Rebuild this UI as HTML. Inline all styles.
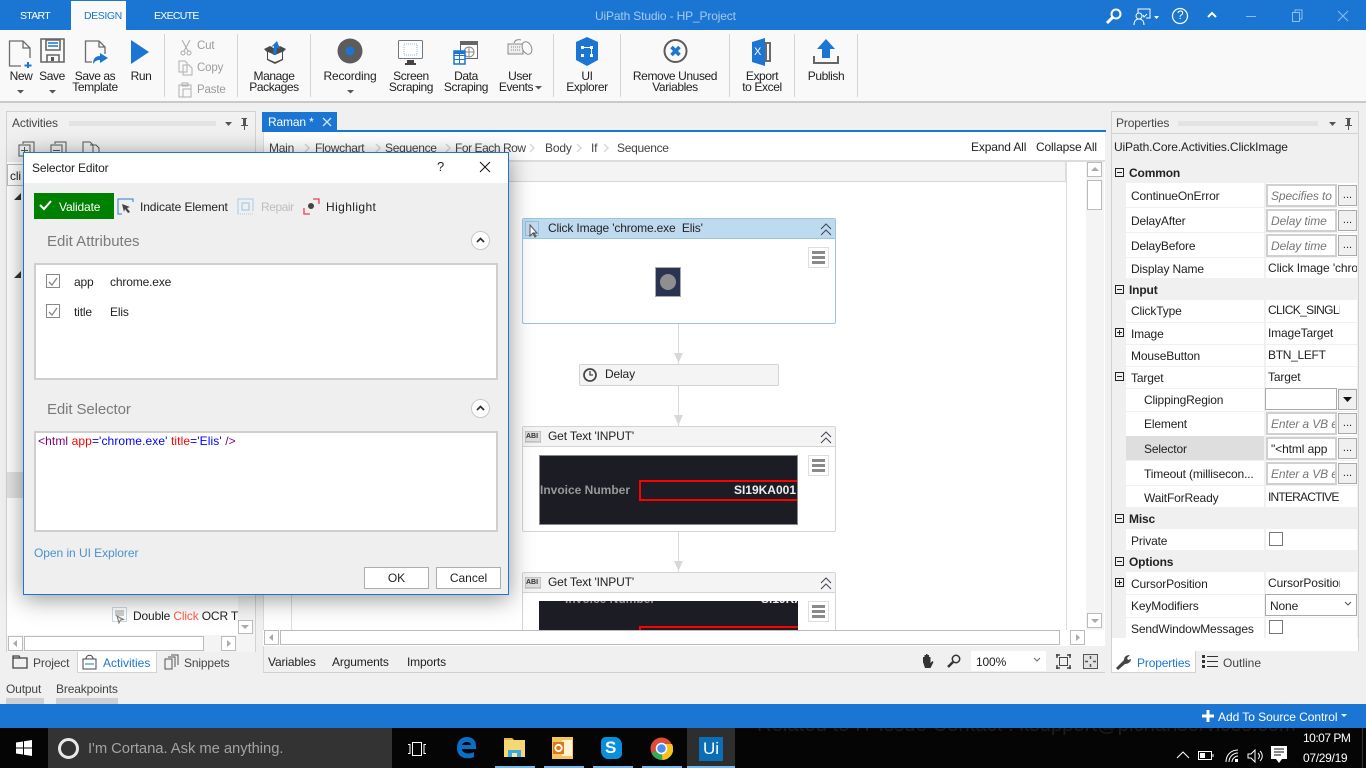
<!DOCTYPE html>
<html><head><meta charset="utf-8"><title>UiPath Studio - HP_Project</title>
<style>
html,body{margin:0;padding:0;width:1366px;height:768px;overflow:hidden;background:#f0f0f0;font-family:"Liberation Sans",sans-serif;font-size:12px;color:#222}
div,span,svg{position:absolute;box-sizing:border-box}
.t{white-space:nowrap;line-height:16px;letter-spacing:-.15px}
.c{text-align:center;line-height:11px;transform:translateX(-50%);white-space:nowrap;letter-spacing:-.4px;color:#222}
.w{color:#fff}
.sb{background:#fff;border:1px solid #bbb}
.tb{background:#fff;border:2px solid #d0d0d0;font-style:italic;color:#777;white-space:nowrap;overflow:hidden;line-height:20px;padding-left:3px;letter-spacing:-.1px}
.dd{background:#f0f0f0;border:1px solid #aaa;text-align:center;line-height:19px;width:19px;height:21px;left:1338px;font-size:11px}
.wr{background:#fff;left:1126px;width:231px}
.sep{width:1px;top:34px;height:63px;background:#d4d4d4}
.pm{width:9px;height:9px;border:1px solid #222;left:1115px}
.pm:before{content:"";position:absolute;left:1px;top:3px;width:5px;height:1px;background:#222}
.pl:after{content:"";position:absolute;left:3px;top:1px;width:1px;height:5px;background:#222}
.ham{left:808px;width:21px;height:21px;background:#fff;border:1px solid #ddd}
.ham:before{content:"";position:absolute;left:3px;top:3px;width:13px;height:3px;background:#8a8a8a;box-shadow:0 5px 0 #8a8a8a,0 10px 0 #8a8a8a}
.card{left:522px;width:314px;background:#fff;border:1px solid #d4d4d4;border-radius:2px}
</style></head><body>

<!-- title bar -->
<div style="left:0;top:0;width:1366px;height:30px;background:#1a76d2"></div>
<div style="left:71px;top:1px;width:55px;height:29px;background:#f9f9f9"></div>
<span class="t w" style="left:20px;top:8px;font-size:10.500px;letter-spacing:-.7px">START</span>
<span class="t" style="left:84px;top:8px;font-size:10.500px;letter-spacing:-.4px;color:#1a76d2">DESIGN</span>
<span class="t w" style="left:154px;top:8px;font-size:10.500px;letter-spacing:-.7px">EXECUTE</span>
<span class="t" style="left:595px;top:8px;color:#a6c9ee">UiPath Studio - HP_Project</span>
<svg style="left:1105px;top:7px" width="18" height="18" fill="none" stroke="#fff"><circle cx="11" cy="7" r="4.500" stroke-width="2"/><path d="M8 10l-6 6" stroke-width="3"/></svg>
<svg style="left:1133px;top:8px" width="28" height="18" fill="none" stroke="#fff"><path d="M5 5V1h12v9h-4"/><circle cx="6" cy="8" r="3"/><path d="M1 17c0-4 2-6 5-6s5 2 5 6"/><path d="M10 7l1 2 3-3"/><path d="M21 8h5l-2.500 3z" fill="#fff" stroke="none"/></svg>
<svg style="left:1171px;top:7px" width="18" height="18" fill="none" stroke="#fff"><circle cx="9" cy="9" r="7.500" stroke-width="1.200"/></svg>
<span class="t w" style="left:1177px;top:7px;font-size:12px">?</span>
<svg style="left:1207px;top:11px" width="10" height="8" fill="none" stroke="#fff" stroke-width="2"><path d="M1 6l4-4 4 4"/></svg>
<div style="left:1246px;top:16px;width:10px;height:1px;background:#8fbdec"></div>
<svg style="left:1291px;top:9px" width="12" height="14" fill="none" stroke="#8fbdec"><path d="M1.500 3.500h7v9h-7zM4 3V1h7v9H9"/></svg>
<svg style="left:1337px;top:10px" width="12" height="12" fill="none" stroke="#8fbdec"><path d="M1 1l10 10M11 1L1 11"/></svg>

<!-- ribbon -->
<div style="left:0;top:30px;width:1366px;height:73px;background:#f9f9f9;border-bottom:2px solid #c9c9c9"></div>
<div class="sep" style="left:164px"></div><div class="sep" style="left:237px"></div><div class="sep" style="left:310px"></div><div class="sep" style="left:553px"></div><div class="sep" style="left:620px"></div><div class="sep" style="left:729px"></div><div class="sep" style="left:794px"></div><div class="sep" style="left:857px"></div>

<svg style="left:8px;top:38px" width="26" height="30" fill="none" stroke="#6b6b6b" stroke-width="1.300"><path d="M13 28H1.500V3H15l7 7v10M15 3v7h7"/><path d="M20 24v7M16.500 27.500h7" stroke="#1a76d2" stroke-width="2"/></svg>
<svg style="left:40px;top:38px" width="26" height="26" fill="none" stroke="#666" stroke-width="1.600"><path d="M1 1h23v23H1z"/><path d="M6 2h14v10H6z" fill="#f9f9f9"/><path d="M8 5h10M8 8h10" stroke="#1a76d2" stroke-width="1.500"/><path d="M7 24v-7h12v7"/><path d="M11 19h3v4h-3z" fill="#555" stroke="none"/></svg>
<svg style="left:84px;top:38px" width="26" height="28" fill="none" stroke="#6b6b6b" stroke-width="1.300"><path d="M8 24H1.500V3H15l6 6v7M15 3v6h6"/><path d="M9 26c0-6 3-8 7-8v-3l8 5-8 5v-3c-3 0-5 1-7 4z" fill="#1a76d2" stroke="none"/></svg>
<svg style="left:131px;top:40px" width="18" height="24"><path d="M0 0l18 12L0 24z" fill="#1a76d2"/></svg>
<span class="c" style="left:21px;top:71px">New</span><span class="c" style="left:52px;top:71px">Save</span><span class="c" style="left:95px;top:71px">Save as<br>Template</span><span class="c" style="left:141px;top:71px">Run</span>
<svg style="left:17px;top:90px" width="46" height="4" fill="#555"><path d="M0 0h7L3.500 3.500zM32 0h7l-3.500 3.500z"/></svg>

<svg style="left:180px;top:40px" width="12" height="16" fill="none" stroke="#a8a8a8"><path d="M2 0l6 11M10 0L4 11"/><circle cx="3" cy="13" r="2"/><circle cx="9" cy="13" r="2"/></svg>
<svg style="left:178px;top:60px" width="15" height="16" fill="none" stroke="#b0b0b0"><path d="M1 1h6l2 2v9H1zM5 5h6l3 3v7H5z" fill="#f9f9f9"/></svg>
<svg style="left:178px;top:82px" width="15" height="16" fill="none" stroke="#b0b0b0"><path d="M1 3h12v12H1zM4 1h6v3H4zM5 7h8v8H5z"/></svg>
<span class="t" style="left:197px;top:38px;color:#9c9c9c;font-size:11.500px">Cut</span><span class="t" style="left:197px;top:60px;color:#9c9c9c;font-size:11.500px">Copy</span><span class="t" style="left:197px;top:82px;color:#9c9c9c;font-size:11.500px">Paste</span>

<svg style="left:262px;top:40px" width="26" height="26"><path d="M2 9l6-3 5 3 5-3 6 3-3 3v8l-8 4-8-4v-8z" fill="#4a4a4a"/><path d="M6 12l7 3 7-3v7l-7 3-7-3z" fill="#f9f9f9"/><path d="M11 15l1-9-3 1 6-6 3 8-3-1-1 7z" fill="#1a76d2"/></svg>
<span class="c" style="left:274px;top:71px">Manage<br>Packages</span>
<svg style="left:337px;top:38px" width="26" height="26"><circle cx="13" cy="13" r="12.500" fill="#5c5c5c"/><circle cx="13" cy="13" r="4.500" fill="#1a76d2"/></svg>
<span class="c" style="left:350px;top:71px;letter-spacing:-.2px">Recording</span>
<svg style="left:347px;top:90px" width="7" height="4" fill="#555"><path d="M0 0h7L3.500 3.500z"/></svg>
<svg style="left:398px;top:40px" width="25" height="26" fill="none"><rect x=".5" y=".5" width="24" height="18" rx="1" fill="#fff" stroke="#777"/><rect x="6" y="4" width="13" height="11" stroke="#8db8e6" stroke-dasharray="1 1"/><path d="M9 23v-3h7v3z" fill="#444"/><path d="M7 24h11" stroke="#444" stroke-width="2"/></svg>
<span class="c" style="left:411px;top:71px">Screen<br>Scraping</span>
<svg style="left:453px;top:41px" width="26" height="26" fill="none"><rect x="7.500" y=".5" width="17" height="17" fill="#fff" stroke="#666"/><path d="M8 1h16v3H8z" fill="#666"/><circle cx="16" cy="11" r="5" stroke="#888"/><path d="M11 11h10M16 6v10" stroke="#888"/><rect x="1" y="10" width="11" height="13" fill="#fff" stroke="#1a76d2" stroke-width="1.500"/><path d="M1 14.500h11M1 18.500h11M6.500 10v13" stroke="#1a76d2"/><path d="M1 10h11v3H1z" fill="#1a76d2"/></svg>
<span class="c" style="left:466px;top:71px">Data<br>Scraping</span>
<svg style="left:507px;top:38px" width="27" height="20" fill="none" stroke="#8a8a8a"><path d="M1 6h15v10H1z" fill="#eee"/><path d="M4 9h9M4 12h9" stroke-dasharray="1 1"/><path d="M7 5c1-3 4-4 7-3"/><ellipse cx="20" cy="10" rx="4.500" ry="6.500" fill="#f9f9f9" transform="rotate(-25 20 10)"/></svg>
<span class="c" style="left:520px;top:71px">User</span><span class="c" style="left:516px;top:82px">Events</span>
<svg style="left:535px;top:86px" width="7" height="4" fill="#555"><path d="M0 0h7L3.500 3.500z"/></svg>
<svg style="left:575px;top:37px" width="24" height="30"><path d="M12 0l11 5v18l-11 6L1 23V5z" fill="#1a76d2"/><g fill="#fff"><rect x="6" y="9" width="3" height="3"/><rect x="15" y="9" width="3" height="3"/><rect x="6" y="17" width="3" height="3"/><rect x="15" y="17" width="3" height="3"/><rect x="9" y="10" width="6" height="1"/><rect x="16" y="12" width="1" height="5"/></g></svg>
<span class="c" style="left:587px;top:71px">UI<br>Explorer</span>
<svg style="left:663px;top:38px" width="25" height="26" fill="none"><circle cx="12.500" cy="13" r="11" stroke="#5c5c5c" stroke-width="2"/><path d="M8.500 9l8 8M16.500 9l-8 8" stroke="#1a76d2" stroke-width="3.500"/></svg>
<span class="c" style="left:675px;top:71px">Remove Unused<br>Variables</span>
<svg style="left:751px;top:38px" width="22" height="28"><path d="M1 4l13-4v28L1 24z" fill="#1a76d2"/><path d="M14 4h6v20h-6z" fill="#6b6b6b"/><path d="M16 6h2v16h-2z" fill="#f9f9f9"/></svg>
<span class="t w" style="left:754px;top:44px;font-size:11px">X</span>
<span class="c" style="left:762px;top:71px">Export<br>to Excel</span>
<svg style="left:813px;top:38px" width="26" height="28"><path d="M13 1l9 10h-5v9H9v-9H4z" fill="#1a76d2"/><path d="M1 18v7h24v-7" fill="none" stroke="#666" stroke-width="2"/></svg>
<span class="c" style="left:826px;top:71px">Publish</span>

<!-- activities panel -->
<div style="left:6px;top:111px;width:250px;height:541px;background:#fff;border:1px solid #d2d2d2"></div>
<div style="left:7px;top:112px;width:248px;height:50px;background:linear-gradient(#f2f2f2,#ececec)"></div>
<span class="t" style="left:12px;top:115px;color:#444">Activities</span>
<div style="left:69px;top:121px;width:147px;height:5px;background:radial-gradient(#bbb 40%,transparent 45%) 0 0/2px 2px"></div>
<svg style="left:225px;top:117px" width="24" height="14"><path d="M0 5h7L3.500 9z" fill="#555"/><path d="M16 1h6v1h-1v6h2v1h-3v4h-1V9h-3V8h2V2h-1z" fill="#555"/></svg>
<svg style="left:18px;top:141px" width="90" height="16" fill="none" stroke="#555"><path d="M5 3V1h11v11h-3M1 4h11v11H1zM3 9.500h7M6.500 6v7"/><path d="M37 3V1h11v11h-3M33 4h11v11H33zM35 9.500h7"/><path d="M65 14V1h7l3 3v10zM72 4h6l3 3v7"/></svg>
<div class="sb" style="left:7px;top:164px;width:30px;height:22px;border-color:#bbb"></div>
<span class="t" style="left:10px;top:168px">cli</span>
<svg style="left:14px;top:193px" width="8" height="90" fill="#333"><path d="M7 0v7H0zM7 78v7H0z"/></svg>
<div style="left:7px;top:472px;width:30px;height:26px;background:#e3e3e3"></div>
<div style="left:238px;top:596px;width:17px;height:40px;background:#f3f3f3"></div>
<svg style="left:112px;top:607px" width="16" height="17" fill="none"><rect x=".5" y=".5" width="14" height="14" stroke="#8fb3d0" stroke-dasharray="1 1"/><path d="M3 3h9v6H3z" fill="#cfcfcf"/><path d="M5 9l2 7 1.500-3 3-.500z" fill="#eee" stroke="#777"/></svg>
<span class="t" style="left:133px;top:608px;white-space:nowrap">Double <b style="color:#ff5a45;font-weight:400">Click</b> OCR T</span>
<div class="sb" style="left:238px;top:620px;width:15px;height:14px"></div><svg style="left:241px;top:625px" width="9" height="5"><path d="M0 0h8L4 4z" fill="#aaa"/></svg>
<div style="left:7px;top:635px;width:248px;height:17px;background:#f4f4f4"></div>
<div class="sb" style="left:8px;top:636px;width:15px;height:15px"></div><svg style="left:13px;top:640px" width="5" height="8"><path d="M4 0v7L0 3.500z" fill="#aaa"/></svg>
<div class="sb" style="left:24px;top:636px;width:180px;height:15px"></div>
<div class="sb" style="left:221px;top:636px;width:15px;height:15px"></div><svg style="left:227px;top:640px" width="5" height="8"><path d="M0 0v7l4-3.500z" fill="#aaa"/></svg>
<svg style="left:12px;top:655px" width="17" height="15" fill="none" stroke="#444" stroke-width="1.300"><path d="M1 13V1h6l1 2h7v10z"/><path d="M1 3h7"/></svg>
<span class="t" style="left:33px;top:655px;color:#444">Project</span>
<div style="left:77px;top:652px;width:80px;height:21px;background:#fff;border:1px solid #d2d2d2;border-top:0"></div>
<svg style="left:82px;top:654px" width="15" height="16" fill="none" stroke="#444"><path d="M1 5h13v10H1zM4 5c0-5 7-5 7 0"/><path d="M3 10h9" stroke="#1a76d2"/></svg>
<span class="t" style="left:103px;top:655px;color:#1a76d2;letter-spacing:0">Activities</span>
<svg style="left:164px;top:654px" width="15" height="16" fill="none" stroke="#555"><path d="M1 5h7v10H1zM4 3h7v10M7 1h7v10"/></svg>
<span class="t" style="left:184px;top:655px;color:#444">Snippets</span>
<span class="t" style="left:6px;top:681px;color:#444">Output</span><span class="t" style="left:56px;top:681px;color:#444">Breakpoints</span>
<div style="left:6px;top:698px;width:38px;height:6px;background:#d0d0d0"></div><div style="left:56px;top:698px;width:62px;height:6px;background:#d0d0d0"></div>

<!-- designer -->
<div style="left:262px;top:112px;width:75px;height:20px;background:#1a76d2"></div>
<span class="t w" style="left:268px;top:114px">Raman *</span>
<svg style="left:322px;top:117px" width="10" height="10" fill="none" stroke="#cfe2f6" stroke-width="1.300"><path d="M1 1l8 8M9 1l-8 8"/></svg>
<div style="left:262px;top:130px;width:844px;height:2px;background:#1a76d2"></div>
<div style="left:263px;top:132px;width:842px;height:498px;background:#fff;border-left:1px solid #ddd"></div>
<div style="left:263px;top:160px;width:842px;height:2px;background:#dcdcdc"></div>
<span class="t" style="left:269px;top:140px;color:#444;letter-spacing:-.25px">Main</span><span class="t" style="left:315px;top:140px;color:#444;letter-spacing:-.3px">Flowchart</span><span class="t" style="left:385px;top:140px;color:#444;letter-spacing:-.3px">Sequence</span><span class="t" style="left:455px;top:140px;color:#444;letter-spacing:-.45px">For Each Row</span><span class="t" style="left:545px;top:140px;color:#444">Body</span><span class="t" style="left:591px;top:140px;color:#444">If</span><span class="t" style="left:617px;top:140px;color:#444;letter-spacing:-.3px">Sequence</span>
<svg style="left:303px;top:142px" width="330" height="12" fill="none" stroke="#d8d8d8" stroke-width="1.500"><path d="M1 2l4 4-4 4M72 2l4 4-4 4M142 2l4 4-4 4M226 2l4 4-4 4M273 2l4 4-4 4M300 2l4 4-4 4" transform="translate(1)"/></svg>
<span class="t" style="left:971px;top:139px;color:#222">Expand All</span><span class="t" style="left:1036px;top:139px;color:#222">Collapse All</span>
<div style="left:291px;top:162px;width:775px;height:20px;background:#f4f4f4;border-bottom:1px solid #d6d6d6;border-right:1px solid #ddd"></div>
<div style="left:291px;top:162px;width:1px;height:468px;background:#ddd"></div>
<div style="left:1066px;top:162px;width:1px;height:468px;background:#ddd"></div>
<div style="left:1086px;top:162px;width:18px;height:468px;background:#f4f4f4"></div>
<div class="sb" style="left:1087px;top:162px;width:15px;height:15px"></div><svg style="left:1091px;top:167px" width="8" height="5"><path d="M0 4h8L4 0z" fill="#aaa"/></svg>
<div class="sb" style="left:1087px;top:180px;width:15px;height:30px"></div>
<div class="sb" style="left:1087px;top:613px;width:15px;height:15px"></div><svg style="left:1091px;top:619px" width="8" height="5"><path d="M0 0h8L4 4z" fill="#aaa"/></svg>

<!-- connectors -->
<div style="left:678px;top:323px;width:1px;height:41px;background:#d8d8d8"></div>
<svg style="left:674px;top:353px" width="10" height="11"><path d="M0 0h9L4.500 10z" fill="#d8d8d8"/></svg>
<div style="left:678px;top:386px;width:1px;height:40px;background:#d8d8d8"></div>
<svg style="left:674px;top:415px" width="10" height="11"><path d="M0 0h9L4.500 10z" fill="#d8d8d8"/></svg>
<div style="left:678px;top:532px;width:1px;height:40px;background:#d8d8d8"></div>
<svg style="left:674px;top:561px" width="10" height="11"><path d="M0 0h9L4.500 10z" fill="#d8d8d8"/></svg>

<!-- click image card -->
<div class="card" style="top:218px;height:106px;border-color:#9cc5e2"></div>
<div style="left:523px;top:219px;width:312px;height:20px;background:#bedaee;border-bottom:1px solid #9cc5e2"></div>
<svg style="left:525px;top:221px" width="17" height="17" fill="none"><rect x=".5" y=".5" width="13" height="14" stroke="#6ea2cc" stroke-dasharray="1 1"/><path d="M5 4v11l3-3 2 4 1-1-2-3h3z" fill="#fff" stroke="#555"/></svg>
<span class="t" style="left:548px;top:220px">Click Image 'chrome.exe&nbsp; Elis'</span>
<svg style="left:820px;top:223px" width="12" height="13" fill="none" stroke="#445" ><path d="M1 6l5-5 5 5M1 12l5-5 5 5"/></svg>
<div class="ham" style="top:247px"></div>
<div style="left:655px;top:267px;width:26px;height:30px;background:#2a3352;border:1px solid #aaa"></div>
<div style="left:660px;top:274px;width:16px;height:16px;border-radius:50%;background:#8f8f8f"></div>

<!-- delay -->
<div style="left:579px;top:364px;width:200px;height:22px;background:#f4f4f4;border:1px solid #d4d4d4;border-radius:2px"></div>
<svg style="left:583px;top:368px" width="15" height="15" fill="none" stroke="#444"><circle cx="7" cy="7" r="6" stroke-width="1.700"/><path d="M7 3v4h3" stroke-width="1.300"/></svg>
<span class="t" style="left:605px;top:366px">Delay</span>

<!-- get text 1 -->
<div class="card" style="top:426px;height:106px"></div>
<div style="left:523px;top:427px;width:312px;height:20px;background:#f4f4f4;border-bottom:1px solid #d4d4d4"></div>
<svg style="left:525px;top:431px" width="16" height="12"><rect width="16" height="11" fill="#ddd" stroke="#aaa"/></svg><span style="left:526px;top:433px;font-size:7px;font-weight:700;line-height:8px;color:#333">ABI</span>
<span class="t" style="left:548px;top:428px">Get Text 'INPUT'</span>
<svg style="left:820px;top:431px" width="12" height="13" fill="none" stroke="#445"><path d="M1 6l5-5 5 5M1 12l5-5 5 5"/></svg>
<div class="ham" style="top:455px"></div>
<div style="left:539px;top:455px;width:259px;height:70px;background:#1c1c24;border:1px solid #888;overflow:hidden">
<div style="left:99px;top:24px;width:170px;height:21px;border:2px solid #f00"></div>
<span style="left:0;top:27px;font-weight:700;color:#999;line-height:14px;white-space:nowrap;letter-spacing:0">Invoice Number</span>
<span style="right:1px;top:27px;font-weight:700;color:#eee;line-height:14px;white-space:nowrap">SI19KA001</span>
</div>

<!-- get text 2 -->
<div class="card" style="top:572px;height:60px"></div>
<div style="left:523px;top:573px;width:312px;height:20px;background:#f4f4f4;border-bottom:1px solid #d4d4d4"></div>
<svg style="left:525px;top:577px" width="16" height="12"><rect width="16" height="11" fill="#ddd" stroke="#aaa"/></svg><span style="left:526px;top:579px;font-size:7px;font-weight:700;line-height:8px;color:#333">ABI</span>
<span class="t" style="left:548px;top:574px">Get Text 'INPUT'</span>
<svg style="left:820px;top:577px" width="12" height="13" fill="none" stroke="#445"><path d="M1 6l5-5 5 5M1 12l5-5 5 5"/></svg>
<div class="ham" style="top:601px"></div>
<div style="left:539px;top:601px;width:259px;height:30px;background:#1c1c24;overflow:hidden">
<div style="left:100px;top:25px;width:170px;height:21px;border:2px solid #f00"></div>
<span style="left:26px;top:-9px;font-weight:700;color:#999;line-height:14px;white-space:nowrap">Invoice Number</span>
<span style="left:222px;top:-9px;font-weight:700;color:#eee;line-height:14px">SI19KA</span>
</div>

<!-- designer bottom -->
<div style="left:263px;top:630px;width:842px;height:16px;background:#fff"></div>
<div class="sb" style="left:264px;top:630px;width:15px;height:15px"></div><svg style="left:269px;top:634px" width="5" height="8"><path d="M4 0v7L0 3.500z" fill="#aaa"/></svg>
<div class="sb" style="left:280px;top:630px;width:780px;height:15px"></div>
<div class="sb" style="left:1070px;top:630px;width:15px;height:15px"></div><svg style="left:1076px;top:634px" width="5" height="8"><path d="M0 0v7l4-3.500z" fill="#aaa"/></svg>
<div style="left:263px;top:646px;width:842px;height:27px;background:#f0f0f0;border-bottom:1px solid #d0d0d0;border-left:1px solid #d8d8d8"></div>
<span class="t" style="left:268px;top:654px">Variables</span><span class="t" style="left:332px;top:654px">Arguments</span><span class="t" style="left:407px;top:654px">Imports</span>
<svg style="left:920px;top:653px" width="15" height="16"><path d="M3 9V4h1.500v4V2H6v6V1h1.500v7V2H9v7V4h1.500v6l2-2 1 1-3 6H5z" fill="#333"/></svg>
<svg style="left:947px;top:654px" width="14" height="14" fill="none" stroke="#333"><circle cx="9" cy="5" r="3.700" stroke-width="1.500"/><path d="M6 8l-5 5" stroke-width="2.500"/></svg>
<div style="left:971px;top:651px;width:75px;height:20px;background:#fff"></div>
<span class="t" style="left:976px;top:654px">100%</span>
<svg style="left:1033px;top:657px" width="8" height="6" fill="none" stroke="#666"><path d="M1 1l3 3 3-3"/></svg>
<svg style="left:1056px;top:654px" width="15" height="15" fill="none" stroke="#444"><path d="M3.500 3.500h8v8h-8z"/><path d="M0 1l4 0M1 0v4M11 1h4M14 0v4M1 11v4M0 14h4M14 11v4M11 14h4" stroke-width="1.500"/></svg>
<svg style="left:1083px;top:654px" width="15" height="15" fill="none" stroke="#555"><rect x=".5" y=".5" width="14" height="14" fill="#e2e2e2"/><path d="M7.500 2v3M7.500 10v3M2 7.500h3M10 7.500h3" stroke-width="1.500"/></svg>

<!-- properties -->
<div style="left:1111px;top:111px;width:248px;height:540px;background:#f0f0f0;border:1px solid #d2d2d2"></div>
<div style="left:1112px;top:133px;width:246px;height:1px;background:#d2d2d2"></div>
<span class="t" style="left:1116px;top:115px;color:#444">Properties</span>
<div style="left:1178px;top:121px;width:140px;height:5px;background:radial-gradient(#bbb 40%,transparent 45%) 0 0/2px 2px"></div>
<svg style="left:1329px;top:117px" width="24" height="14"><path d="M0 5h7L3.500 9z" fill="#555"/><path d="M16 1h6v1h-1v6h2v1h-3v4h-1V9h-3V8h2V2h-1z" fill="#555"/></svg>
<span class="t" style="left:1114px;top:139px;font-size:12px;color:#222">UiPath.Core.Activities.ClickImage</span>

<div class="pm" style="top:168px"></div><span class="t" style="left:1129px;top:165px;font-weight:700">Common</span>
<div class="wr" style="top:183px;height:95px"></div>
<div class="wr" style="top:300px;height:207px"></div>
<div class="wr" style="top:529px;height:21px"></div>
<div class="wr" style="top:572px;height:66px"></div>
<div style="left:1112px;top:638px;width:246px;height:13px;background:#fff"></div>
<div style="left:1264px;top:183px;width:2px;height:455px;background:#f0f0f0"></div>
<div style="left:1126px;top:207px;width:231px;height:1px;background:#f0f0f0;box-shadow:0 25px #f0f0f0,0 50px #f0f0f0,0 115px #f0f0f0,0 137px #f0f0f0,0 159px #f0f0f0,0 181px #f0f0f0,0 204px #f0f0f0,0 229px #f0f0f0,0 253px #f0f0f0,0 278px #f0f0f0,0 387px #f0f0f0,0 410px #f0f0f0"></div>

<span class="t" style="left:1131px;top:188px">ContinueOnError</span><div class="tb" style="left:1266px;top:184px;width:71px;height:23px">Specifies to</div><div class="dd" style="top:185px">...</div>
<span class="t" style="left:1131px;top:213px">DelayAfter</span><div class="tb" style="left:1266px;top:209px;width:71px;height:23px">Delay time</div><div class="dd" style="top:210px">...</div>
<span class="t" style="left:1131px;top:238px">DelayBefore</span><div class="tb" style="left:1266px;top:234px;width:71px;height:23px">Delay time</div><div class="dd" style="top:235px">...</div>
<span class="t" style="left:1131px;top:261px">Display Name</span><div style="left:1268px;top:260px;width:89px;height:16px;overflow:hidden;white-space:nowrap;line-height:16px;letter-spacing:-.1px">Click Image 'chrome.exe</div>

<div class="pm" style="top:285px"></div><span class="t" style="left:1129px;top:282px;font-weight:700">Input</span>
<span class="t" style="left:1131px;top:303px">ClickType</span><div style="left:1268px;top:302px;width:72px;height:16px;overflow:hidden;white-space:nowrap;line-height:16px;letter-spacing:-.65px">CLICK_SINGLE</div>
<div class="pm pl" style="top:328px"></div><span class="t" style="left:1131px;top:326px">Image</span><span class="t" style="left:1268px;top:325px">ImageTarget</span>
<span class="t" style="left:1131px;top:348px">MouseButton</span><span class="t" style="left:1268px;top:347px;letter-spacing:-.3px">BTN_LEFT</span>
<div class="pm" style="top:372px"></div><span class="t" style="left:1131px;top:370px">Target</span><span class="t" style="left:1268px;top:369px">Target</span>
<span class="t" style="left:1144px;top:392px">ClippingRegion</span><div style="left:1265px;top:388px;width:72px;height:22px;background:#fff;border:1px solid #aaa"></div><div class="dd" style="top:389px"></div><svg style="left:1343px;top:397px" width="10" height="6"><path d="M0 0h9L4.500 5z" fill="#111"/></svg>
<span class="t" style="left:1144px;top:416px">Element</span><div class="tb" style="left:1266px;top:412px;width:71px;height:23px">Enter a VB e</div><div class="dd" style="top:413px">...</div>
<div style="left:1126px;top:436px;width:138px;height:24px;background:#dedede"></div>
<span class="t" style="left:1144px;top:441px">Selector</span><div class="tb" style="left:1266px;top:437px;width:71px;height:23px;font-style:normal;color:#222">"&lt;html app</div><div class="dd" style="top:438px">...</div>
<span class="t" style="left:1144px;top:466px">Timeout (millisecon...</span><div class="tb" style="left:1266px;top:462px;width:71px;height:23px">Enter a VB e</div><div class="dd" style="top:463px">...</div>
<span class="t" style="left:1144px;top:490px">WaitForReady</span><span class="t" style="left:1268px;top:489px;letter-spacing:-.8px">INTERACTIVE</span>
<div class="pm" style="top:514px"></div><span class="t" style="left:1129px;top:511px;font-weight:700">Misc</span>
<span class="t" style="left:1131px;top:533px">Private</span><div style="left:1269px;top:532px;width:14px;height:14px;background:#fff;border:1px solid #777"></div>
<div class="pm" style="top:557px"></div><span class="t" style="left:1129px;top:554px;font-weight:700">Options</span>
<div class="pm pl" style="top:578px"></div><span class="t" style="left:1131px;top:576px">CursorPosition</span><div style="left:1268px;top:575px;width:72px;height:16px;overflow:hidden;white-space:nowrap;line-height:16px;letter-spacing:-.1px">CursorPosition</div>
<span class="t" style="left:1131px;top:598px">KeyModifiers</span><div style="left:1265px;top:594px;width:92px;height:22px;background:#fff;border:1px solid #aaa"></div><span class="t" style="left:1270px;top:598px">None</span><svg style="left:1344px;top:601px" width="8" height="6" fill="none" stroke="#555"><path d="M1 1l3 3 3-3"/></svg>
<span class="t" style="left:1131px;top:621px">SendWindowMessages</span><div style="left:1269px;top:620px;width:14px;height:14px;background:#fff;border:1px solid #777"></div>

<div style="left:1111px;top:651px;width:85px;height:22px;background:#fff;border:1px solid #d2d2d2;border-top:0"></div>
<svg style="left:1115px;top:654px" width="18" height="16"><path d="M1 14l8-8c0-3 2-5 6-5l-3 3 1 2 3-1c0 3-3 5-6 5l-7 6z" fill="#444"/></svg>
<span class="t" style="left:1137px;top:655px;color:#1a76d2">Properties</span>
<svg style="left:1202px;top:655px" width="17" height="14" fill="#333"><path d="M0 0h3v3H0zM0 5h3v3H0zM0 10h3v3H0zM5 1h11v1H5zM5 6h11v1H5zM5 11h11v1H5z"/></svg>
<span class="t" style="left:1223px;top:655px;color:#444;letter-spacing:0">Outline</span>

<!-- status and taskbar -->
<div style="left:0;top:728px;width:1366px;height:40px;background:#050505;overflow:hidden">
<span style="left:757px;top:-15px;font-size:20.300px;line-height:24px;color:#1e1e1e;white-space:nowrap">Related to IT Issue Contact : itsupport@pichanservices.com</span>
</div>
<div style="left:0;top:704px;width:1366px;height:24px;background:#1a76d2"></div>
<svg style="left:1202px;top:710px" width="12" height="12"><path d="M4.500 0h3v4.500H12v3H7.500V12h-3V7.500H0v-3h4.500z" fill="#fff"/></svg>
<span class="t w" style="left:1218px;top:709px;letter-spacing:-.05px">Add To Source Control</span>
<svg style="left:1341px;top:714px" width="7" height="4"><path d="M0 0h6L3 3z" fill="#fff"/></svg>

<svg style="left:16px;top:740px" width="16" height="16"><path d="M0 2.500l7-1V7.500H0zM8 1.300l8-1.300V7.500H8zM0 8.500h7v6l-7-1zM8 8.500h8V16l-8-1.300z" fill="#fff"/></svg>
<div style="left:48px;top:728px;width:344px;height:40px;background:#333"></div>
<div style="left:58px;top:738px;width:21px;height:21px;border-radius:50%;border:3px solid #e8e8e8"></div>
<span class="t" style="left:88px;top:741px;font-size:14.800px;color:#a2a2a2;letter-spacing:-.05px">I'm Cortana. Ask me anything.</span>
<svg style="left:407px;top:741px" width="20" height="16" fill="none" stroke="#fff"><path d="M5.500 1.500h9v13h-9zM1 3.500h2v9H1M19 3.500h-2v9h2"/></svg>
<svg style="left:456px;top:737px" width="20" height="22"><path d="M1 11C1 4 5 0 11 0c5 0 9 3 9 9v3H6c0 4 7 6 12 3v5c-7 3-17 1-17-9zM6 8h9c0-4-8-4-9 0z" fill="#0a6fc9"/></svg>
<svg style="left:504px;top:738px" width="21" height="20"><path d="M0 0h8l2 2h11v17H0z" fill="#f7d774"/><path d="M0 0h8l2 2H0z" fill="#e0b848"/><path d="M4 12h13v7H4z" fill="#3fa8e0"/><path d="M8 15h5v4H8z" fill="#f7e7a8"/></svg>
<svg style="left:552px;top:737px" width="22" height="22"><rect width="21" height="22" fill="#f5c65a"/><rect x="10" y="3" width="10" height="16" fill="#fff3d0"/><rect x="1" y="5" width="11" height="12" fill="#d8791a"/><circle cx="6.500" cy="11" r="3.200" fill="none" stroke="#fff" stroke-width="1.800"/></svg>
<svg style="left:601px;top:736px" width="22" height="24"><path d="M5 1h9c4 0 7 4 7 8v9c0 3-3 5-6 5H7c-4 0-7-4-7-8V6c0-3 2-5 5-5z" fill="#0a8fdc"/></svg>
<span class="w" style="left:605px;top:738px;font-size:17px;font-weight:700;line-height:20px">S</span>
<svg style="left:650px;top:737px" width="23" height="23"><circle cx="11.500" cy="11.500" r="11" fill="#dd4b39"/><path d="M11.500 11.500L1.500 16a11 11 0 0 0 11 7z" fill="#3aa757"/><path d="M11.500 11.500l1 11.500a11 11 0 0 0 9.500-16h-10.500z" fill="#f7c21b"/><circle cx="11.500" cy="11.500" r="5" fill="#4a8ff0" stroke="#fff" stroke-width="1.500"/></svg>
<div style="left:687px;top:728px;width:48px;height:38px;background:#2e2e2e"></div>
<div style="left:699px;top:737px;width:24px;height:24px;background:#0b6fb8;color:#fff;font-size:17px;line-height:24px;text-align:center">Ui</div>
<div style="left:495px;top:766px;width:40px;height:2px;background:#76b9ed"></div><div style="left:544px;top:766px;width:40px;height:2px;background:#76b9ed"></div><div style="left:593px;top:766px;width:40px;height:2px;background:#76b9ed"></div><div style="left:642px;top:766px;width:40px;height:2px;background:#76b9ed"></div><div style="left:687px;top:766px;width:48px;height:2px;background:#76b9ed"></div>

<svg style="left:1176px;top:750px" width="14" height="9" fill="none" stroke="#fff"><path d="M1 8l6-6 6 6"/></svg>
<svg style="left:1198px;top:751px" width="16" height="10" fill="none" stroke="#fff"><path d="M.5.500h13v8H.5z"/><path d="M2 2h5v5H2z" fill="#fff" stroke="none"/><path d="M15 3v3"/></svg>
<svg style="left:1225px;top:749px" width="14" height="14" fill="none" stroke="#fff"><path d="M1 13C1 6 6 1 13 1M4 13c0-5 4-9 9-9M7 13c0-3 3-6 6-6"/><path d="M10 10h3v3h-3z" fill="#fff" stroke="none"/></svg>
<svg style="left:1247px;top:749px" width="17" height="14" fill="none" stroke="#fff"><path d="M1 5h3l4-4v12L4 9H1zM11 4c2 2 2 4 0 6M13 2c3 3 3 7 0 10"/></svg>
<svg style="left:1271px;top:746px" width="17" height="18"><path d="M0 0h16v13h-5l-3 4-3-4H0z" fill="#fff"/><path d="M3 3h10M3 6h10M3 9h7" stroke="#111"/></svg>
<span class="t w" style="left:1303px;top:730px;letter-spacing:-.5px">10:07 PM</span>
<span class="t w" style="left:1303px;top:750px;letter-spacing:-.3px">07/29/19</span>
<div style="left:1362px;top:728px;width:1px;height:40px;background:#333"></div>

<!-- dialog -->
<div style="left:23px;top:152px;width:486px;height:443px;background:#efefef;border:1px solid #1a76d2;box-shadow:0 4px 22px rgba(0,0,0,.42)"></div>
<div style="left:24px;top:153px;width:484px;height:30px;background:#fff"></div>
<span class="t" style="left:32px;top:160px">Selector Editor</span>
<span class="t" style="left:437px;top:159px;font-size:13px">?</span>
<svg style="left:479px;top:161px" width="12" height="12" fill="none" stroke="#111"><path d="M1 1l10 10M11 1L1 11"/></svg>
<div style="left:34px;top:193px;width:80px;height:26px;background:#008000"></div>
<svg style="left:39px;top:200px" width="13" height="11" fill="none" stroke="#fff" stroke-width="2"><path d="M1 5l4 4 7-8"/></svg>
<span class="t" style="left:59px;top:199px;color:#fff">Validate</span>
<svg style="left:117px;top:198px" width="17" height="17" fill="none" stroke="#2a7fc9"><path d="M15 1H1v15h4M11 1h5v3"/><path d="M5 6l8 3-3 1 3 4-2 1-3-4-1 3z" fill="#444" stroke="none"/></svg>
<span class="t" style="left:140px;top:199px;letter-spacing:-.1px">Indicate Element</span>
<svg style="left:237px;top:198px" width="17" height="17" fill="none" stroke="#a9cdea"><path d="M1 16V1h15v12" /><path d="M1 16h15" stroke-dasharray="1 1"/><rect x="5" y="5" width="7" height="7" stroke-width="1.300"/></svg>
<span class="t" style="left:261px;top:199px;color:#bdbdbd;letter-spacing:-.45px">Repair</span>
<svg style="left:303px;top:198px" width="17" height="17" fill="none" stroke="#f03c55" stroke-width="1.300"><path d="M10 1h6v5M1 10v6h6"/><circle cx="8" cy="8" r="3" fill="#444" stroke="none"/></svg>
<span class="t" style="left:326px;top:199px;letter-spacing:.4px">Highlight</span>
<span class="t" style="left:47px;top:234px;font-size:15px;color:#7a7a7a;letter-spacing:0">Edit Attributes</span>
<div style="left:471px;top:231px;width:19px;height:19px;border-radius:50%;background:#fff;border:1px solid #c8c8c8"></div>
<svg style="left:476px;top:237px" width="9" height="6" fill="none" stroke="#333" stroke-width="1.800"><path d="M1 5l3.500-3.500L8 5"/></svg>
<div style="left:34px;top:263px;width:464px;height:117px;background:#fff;border:2px solid #cfcfcf"></div>
<div style="left:46px;top:274px;width:14px;height:14px;border:1px solid #888;background:#fff"></div>
<svg style="left:48px;top:277px" width="11" height="10" fill="none" stroke="#888" stroke-width="1.300"><path d="M1 5l3 3 5-7"/></svg>
<span class="t" style="left:74px;top:274px">app</span><span class="t" style="left:110px;top:274px">chrome.exe</span>
<div style="left:46px;top:304px;width:14px;height:14px;border:1px solid #888;background:#fff"></div>
<svg style="left:48px;top:307px" width="11" height="10" fill="none" stroke="#888" stroke-width="1.300"><path d="M1 5l3 3 5-7"/></svg>
<span class="t" style="left:74px;top:304px">title</span><span class="t" style="left:110px;top:304px">Elis</span>
<span class="t" style="left:47px;top:402px;font-size:15px;color:#7a7a7a;letter-spacing:-.1px">Edit Selector</span>
<div style="left:471px;top:399px;width:19px;height:19px;border-radius:50%;background:#fff;border:1px solid #c8c8c8"></div>
<svg style="left:476px;top:405px" width="9" height="6" fill="none" stroke="#333" stroke-width="1.800"><path d="M1 5l3.500-3.500L8 5"/></svg>
<div style="left:34px;top:431px;width:464px;height:101px;background:#fff;border:2px solid #cfcfcf"></div>
<span class="t" style="left:38px;top:433px;font-size:12px;letter-spacing:.1px;color:#a31515"><b style="font-weight:400;color:#800080">&lt;html</b> <b style="font-weight:400;color:#f00">app</b><b style="font-weight:400;color:#00f">='chrome.exe'</b> <b style="font-weight:400;color:#f00">title</b><b style="font-weight:400;color:#00f">='Elis'</b> <b style="font-weight:400;color:#800080">/&gt;</b></span>
<span class="t" style="left:34px;top:545px;color:#4a90d0;letter-spacing:-.05px">Open in UI Explorer</span>
<div style="left:364px;top:567px;width:65px;height:22px;background:#fff;border:1px solid #adadad;text-align:center;line-height:20px">OK</div>
<div style="left:436px;top:567px;width:65px;height:22px;background:#fff;border:1px solid #adadad;text-align:center;line-height:20px">Cancel</div>

</body></html>
